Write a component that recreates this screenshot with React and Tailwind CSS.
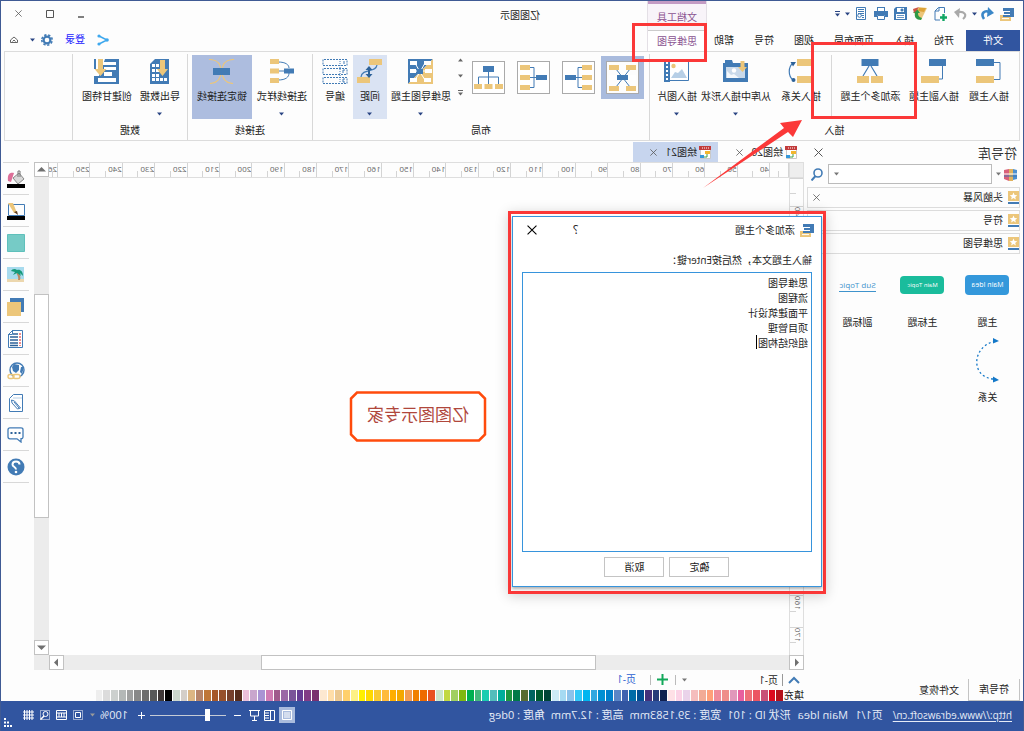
import React from "react";

const BLUE = "#427bb5";
const GOLD = "#ecc67a";

const Svg = ({ w, h, className = "", children }) => (
  <svg width={w} height={h} viewBox={`0 0 ${w} ${h}`} className={`block shrink-0 ${className}`} fill="none" aria-hidden="true">
    {children}
  </svg>
);

const Caret = ({ className = "text-[#2a4583]" }) => (
  <Svg w={5} h={4} className={className}><path d="M0 .5h5L2.5 3.5z" fill="currentColor" /></Svg>
);
const Cross = ({ size = 9, className = "text-[#555]" }) => (
  <svg width={size} height={size} viewBox="0 0 9 9" className={`block shrink-0 ${className}`} fill="none" aria-hidden="true">
    <path d="M.5.5l8 8M8.500.5l-8 8" stroke="currentColor" strokeWidth="1" />
  </svg>
);
const Logo = () => (
  <Svg w={14} h={14}>
    <path d="M4 8h10v6H3v-3z" fill={GOLD} />
    <path d="M0 1h11v3H4v1h6v2H4v1h7v2H0z" fill={BLUE} />
    <path d="M5 11.6h7" stroke="#fff" />
  </Svg>
);

/* ---------- ribbon drawings ---------- */
const IcTopic = () => (
  <Svg w={25} h={24}><path d="M8 3.500H1v17h7" stroke={BLUE} /><path d="M7 0h18v7H7z" fill={BLUE} /><path d="M7 17h18v7H7z" fill={GOLD} /></Svg>
);
const IcSub = () => (
  <Svg w={25} h={24}><path d="M3.500 6v14H8" stroke={BLUE} /><path d="M0 0h17v7H0z" fill={BLUE} /><path d="M7 17h18v7H7z" fill={GOLD} /></Svg>
);
const IcMulti = () => (
  <Svg w={26} h={24}><path d="M12 7L6 17M14 7l6 10" stroke={BLUE} strokeWidth="1.2" /><path d="M4.500 0h17v7h-17z" fill={BLUE} /><path d="M0 17h12v7H0zM14 17h12v7H14z" fill={GOLD} /></Svg>
);
const IcRelation = () => (
  <Svg w={26} h={24}>
    <path d="M0 0h17v7H0zM0 17h17v7H0z" fill={GOLD} />
    <path d="M21 4c5 4 5 13 0 17" stroke={BLUE} strokeWidth="1.200" />
    <path d="M18 3l5.500 0-2.500 4.500z" fill="#2d6299" /><circle cx="20.500" cy="21" r="2" fill="#2d6299" />
  </Svg>
);
const IcFolder = () => (
  <Svg w={25} h={22}>
    <path d="M0 3h15l1-3h7v3h2v19H0z" fill={BLUE} /><path d="M3 7h19v11H3z" fill="#c9d9ea" />
    <circle cx="14" cy="10.500" r="2.200" fill="#fff" /><path d="M9 18l5-4 3 1 4-4v7z" fill="#f4f8fc" /><path d="M3.500 1h4v6H10l-4.500 5L1 7h2.500z" fill={GOLD} />
  </Svg>
);
const IcPicture = () => (
  <Svg w={25} h={22}>
    <path d="M.5 1.500h20v19H.5z" fill="#fff" stroke={BLUE} /><path d="M19 0h6v22h-6z" fill={BLUE} />
    <path d="M21 2h2v2h-2zM21 6h2v2h-2zM21 10h2v2h-2zM21 14h2v2h-2zM21 18h2v2h-2z" fill="#fff" />
    <path d="M2 18l5-9 4 4 3-1 4 6z" fill="#b7cfe6" /><circle cx="15.500" cy="6" r="2.200" fill={GOLD} />
  </Svg>
);
const IcThemes = () => (
  <Svg w={25} h={25}>
    <path d="M0 0h25v25z" fill={BLUE} /><path d="M0 0v25h25z" fill={GOLD} />
    <path d="M2 2h7v4H2zM16 2h7v4h-7zM1 10h7v4H1zM17 10h6v4h-6zM2 19h7v4H2zM16 19h7v4h-7z" fill="#fff" />
    <path d="M8 4l5 9 5-9M8 21l5-8 5 8M8 12h10" stroke="#fff" /><path d="M10 10h6v5h-6z" fill={BLUE} />
  </Svg>
);
const IcSpacing = () => (
  <Svg w={25} h={24}>
    <path d="M0 0h13v6H0zM12 18h13v6H12z" fill={GOLD} /><path d="M5 6c1 8 15 3 16 12" stroke={BLUE} strokeWidth="1.200" />
    <path d="M13 7l3.500 4H14v4h2.500L13 19l-3.500-4H12v-4H9.500z" fill="#2d6299" />
  </Svg>
);
const IcNumber = () => (
  <Svg w={26} h={25}>
    <path d="M1 .5h24v6H1zM1 9.500h24v6H1zM1 18.500h24v6H1z" stroke={BLUE} strokeDasharray="2 1" /><path d="M8 2v21" stroke={BLUE} strokeDasharray="1 1" />
    <path d="M4 2v3M3 11h2v3M3 20h2v3H3" stroke={BLUE} />
  </Svg>
);
const IcConnStyle = () => (
  <Svg w={25} h={24}><path d="M16 3C8 3 5 6 5 9M16 21c-8 0-11-3-11-7M8 12h8" stroke={BLUE} /><path d="M0 9.500h10v5H0z" fill={BLUE} /><path d="M15 0h9v5h-9zM15 9.500h9v5h-9zM15 19h9v5h-9z" fill={GOLD} /></Svg>
);
const IcLock = () => (
  <Svg w={25} h={25}><path d="M0 .5c9 0 12 5 12 12S8 24 1 24.500M25 .5c-9 0-12 5-12 12s4 11.500 11 12" stroke={GOLD} strokeWidth="1.200" /><path d="M4 9h17v7H4z" fill={BLUE} /></Svg>
);
const IcExport = () => (
  <Svg w={19} h={25}>
    <path d="M0 0h14l5 5v20H0z" fill={BLUE} />
    <path d="M10 5h3v3h-3zM14 5h3v3h-3zM10 10h3v3h-3zM14 10h3v3h-3zM2 19h3v3H2zM6 19h3v3H6zM10 15h3v3h-3zM14 15h3v3h-3zM10 19h3v3h-3zM14 19h3v3h-3z" fill="#fff" />
    <path d="M4 1h5v9h3l-5.500 7L1 10h3z" fill={GOLD} />
  </Svg>
);
const IcGantt = () => (
  <Svg w={25} h={25}>
    <path d="M0 0h25v25H0z" fill={BLUE} /><path d="M3 3h13v3H3zM3 8h12v3H3zM7 13h8v4H7zM3 19h18v4H3z" fill="#fff" />
    <path d="M14 0h9v10h2v7h-5z" fill="#fff" /><path d="M16 0h5v10h3.500L18.500 17 12.500 10H16z" fill={GOLD} />
  </Svg>
);

/* ---------- layout gallery ---------- */
const GBoth = () => (
  <Svg w={31} h={31}><path d="M8 7l14 18M22 7L8 25M6 15.500h18" stroke={BLUE} /><path d="M2 3h10v5H2zM19 3h10v5H19zM2 24h10v5H2zM19 24h10v5H19z" fill={GOLD} /><path d="M2 13h8v5H2zM21 13h8v5h-8z" fill="#fff" /><path d="M10 13h11v5H10z" fill={BLUE} /></Svg>
);
const GLeft = () => (
  <Svg w={31} h={31}><path d="M12 5.500h4v20h-4M12 15.500h8" stroke={BLUE} /><path d="M2 3h10v5H2zM2 13h10v5H2zM2 23h10v5H2z" fill={GOLD} /><path d="M18 13h11v5H18z" fill={BLUE} /></Svg>
);
const GRight = () => (
  <Svg w={31} h={31}><path d="M19 5.500h-4v20h4M19 15.500h-8" stroke={BLUE} /><path d="M19 3h10v5H19zM19 13h10v5H19zM19 23h10v5H19z" fill={GOLD} /><path d="M2 13h11v5H2z" fill={BLUE} /></Svg>
);
const GTree = () => (
  <Svg w={31} h={31}><path d="M15.500 9v13M5.500 22v-7h20v7" stroke={BLUE} /><path d="M1 22h8v5H1zM11.500 22h8v5h-8zM22 22h8v5h-8z" fill={GOLD} /><path d="M10 4h11v6H10z" fill={BLUE} /></Svg>
);

/* ---------- quick access ---------- */
const QUndo = () => (<Svg w={13} h={13}><path d="M10 12C14 6 9 3 5 5" stroke="#3b87c8" strokeWidth="2.600" /><path d="M6 0L0 6l7 4z" fill="#3b87c8" /></Svg>);
const QRedo = () => (<Svg w={13} h={13}><path d="M4 12C-1 8 3 4 9 5" stroke="#a9a9a9" strokeWidth="2.200" /><path d="M7 1l6 4-5 6z" fill="#a9a9a9" /></Svg>);
const QNew = () => (<Svg w={13} h={14}><path d="M7 13H12V4L8.500.5H2.500V6" stroke={BLUE} /><path d="M12 4H8V.5" stroke={BLUE} /><path d="M3.500 7v7M0 10.500h7" stroke="#12a664" strokeWidth="2.400" /></Svg>);
const QOpen = () => (<Svg w={14} h={13}><path d="M0 1l8-1 5 6-7 7z" fill={GOLD} /><path d="M1 1h7l1 3-6 1z" fill="#dda338" /><path d="M6 13c5 0 7-3 6-7l2 0-4-4-3 4h2c0 3-1 4-4 5z" fill="#2f9a45" /><path d="M8 0l6 2-1 4-3-3z" fill="#cf5343" /></Svg>);
const QSave = () => (<Svg w={13} h={13}><path d="M0 0h11l2 2v11H0z" fill={BLUE} /><path d="M3 1h7v4H3zM2 7h9v5H2z" fill="#fff" /><path d="M4 2h2v2H4zM3 8.500h7M3 10.500h7" stroke={BLUE} fill={BLUE} strokeWidth=".8" /></Svg>);
const QPrint = () => (<Svg w={14} h={13}><path d="M3 0h8v4H3zM0 4h14v6H0z" fill={BLUE} /><path d="M4 1h6v3H4zM3 8h8v5H3z" fill="#fff" /><path d="M3.500 8.500h7v4h-7z" stroke={BLUE} /></Svg>);
const QPreview = () => (<Svg w={10} h={13}><path d="M.5.5h9v12h-9z" stroke={BLUE} fill="#fff" /><path d="M2 2.500h6M2 4.500h6M2 6.500h6M2 8.500h3M2 10.500h2" stroke={BLUE} /><circle cx="6.500" cy="8.500" r="1.800" stroke={BLUE} fill="#fff" /></Svg>);
const Gear = () => (
  <Svg w={12} h={12}><circle cx="6" cy="6" r="3.400" stroke={BLUE} strokeWidth="2.200" /><circle cx="6" cy="6" r="5.200" stroke={BLUE} strokeWidth="1.600" strokeDasharray="2.300 1.780" /></Svg>
);
const ShareIcon = () => (
  <Svg w={12} h={12}><path d="M10 2L2 6l8 4" stroke="#3ea8ee" strokeWidth="1.500" /><circle cx="10" cy="2" r="1.600" fill="#3ea8ee" /><circle cx="2" cy="6" r="1.800" fill="#3ea8ee" /><circle cx="10" cy="10" r="1.600" fill="#3ea8ee" /></Svg>
);

/* ---------- tool strip ---------- */
const tools = [
  ["填充", <Svg w={18} h={18}><path d="M11 3c4-1 7 1 6 8l-3 1-2-6z" fill="#dd6f98" /><path d="M6 3l6 5-5 6-6-5z" fill="#d9d9d9" stroke="#888" /><path d="M5 7V1h2v6" stroke="#777" /><path d="M0 14h18v4H0z" fill="#000" /></Svg>],
  ["线条", <Svg w={18} h={18}><path d="M.5 2.500h16v11H.5z" stroke={BLUE} /><path d="M0 14h18v4H0z" fill="#000" /><path d="M12 1l5 0-6 10-3 0z" fill={GOLD} /><path d="M11 10l-4 3 1-4z" fill="#5b3b20" /></Svg>],
  ["阴影", <Svg w={18} h={18}><path d="M.5.5h17v17H.5z" fill="#76cbc6" stroke="#5fc0bb" /></Svg>],
  ["图片", <Svg w={17} h={15}><path d="M0 0h17v15H0z" fill="#a8dbee" /><path d="M0 12h17v3H0z" fill="#ecd7ae" /><path d="M6 5c-2 3-3 5-2 8h2c-1-3 1-5 2-8z" fill="#b98a63" /><path d="M1 9c0-5 3-7 6-6 2-2 5-1 6 1l-4 1 2 3-4-2-4 3 1-3z" fill="#169a7a" /></Svg>],
  ["图层", <Svg w={18} h={18}><path d="M1 0h14v14H1z" fill={BLUE} /><path d="M4 4h14v14H4z" fill={GOLD} /></Svg>],
  ["页面", <Svg w={15} h={18}><path d="M.5.5h10l4 4v13H.5z" stroke={BLUE} fill="#fff" /><path d="M10.500 0v4.500H15" stroke={BLUE} /><path d="M5 4h5M5 7h8M5 10h8M5 13h8M5 15.500h8" stroke="#2d6299" strokeWidth="1.300" /><path d="M3 3v13" stroke="#ea5a5a" strokeWidth="1.400" strokeDasharray="2 1" /></Svg>],
  ["链接", <Svg w={18} h={18}><circle cx="8" cy="8" r="7" stroke={BLUE} strokeWidth="1.400" /><path d="M6 3l5-1 2 3-1 4-3 2-3-3z" fill={BLUE} /><path d="M1 5l3 0 1 5-2 2z" fill={BLUE} /><rect x="5" y="12.500" width="7" height="4" rx="2" stroke={GOLD} strokeWidth="1.400" fill="#fff" /><rect x="11" y="12.500" width="6" height="4" rx="2" stroke={GOLD} strokeWidth="1.400" /></Svg>],
  ["附件", <Svg w={14} h={18}><path d="M.5.5h9l4 4v13H.5z" stroke={BLUE} fill="#fff" /><path d="M1 4h9" stroke="#b7cfe6" /><path d="M2.500 14l6-7 3-1-.5 3-5.500 6-3-1M4 14l5-6" stroke={BLUE} /></Svg>],
  ["批注", <Svg w={17} h={16}><path d="M3 .8h11q2 0 2 2v7q0 2-2 2H7L3 15v-3.300q-2 0-2-2v-7q0-1.900 2-1.900z" stroke={BLUE} strokeWidth="1.300" fill="#fff" /><path d="M3.500 6h10" stroke="#2d6299" strokeWidth="2" strokeDasharray="2 2" /></Svg>],
  ["帮助", <Svg w={18} h={18}><circle cx="9" cy="9" r="8.500" fill={BLUE} /><path d="M5.500 6.500c0-4 7-4 7 0 0 2.500-3.500 2-3.500 5" stroke="#fff" strokeWidth="2" /><circle cx="9" cy="14" r="1.300" fill="#fff" /></Svg>],
];

const palette = ["#b5121b", "#dd0a1e", "#c85078", "#ec5563", "#ee7078", "#e8609f", "#e198bb", "#ef8e8a", "#f08c9b", "#ffa07a", "#f2ab96", "#f5bdbd", "#ead3ea", "#fbd3e6", "#fee0e6", "#10204f", "#263c7a", "#44307a", "#004e93", "#006ba8", "#4062b0", "#5a85c6", "#007fcb", "#008fd3", "#33a8e0", "#00b6f0", "#33c8f8", "#8cc2ea", "#a5daf2", "#cdeaf6", "#004437", "#005a30", "#006461", "#576b2f", "#007a48", "#1e9640", "#00ae9b", "#52bdbb", "#1accb0", "#45b87c", "#00b050", "#80b810", "#a0cf60", "#c2d840", "#cce6ca", "#e85320", "#ee6b00", "#f08000", "#f39c52", "#f4a800", "#ffae00", "#ffbb3c", "#f9ca30", "#ffd900", "#fff000", "#fdf184", "#ffd06c", "#ecc890", "#ffdda8", "#fde8d0", "#7a3070", "#823c86", "#663c94", "#7a5499", "#9a68a6", "#a05a8c", "#d07cb4", "#a994d4", "#c9a6cd", "#ebc0da", "#562d1d", "#76402c", "#96502c", "#a65828", "#bf7638", "#b6846a", "#dcb684", "#d4cec8", "#cbd6cc", "#000000", "#3e3736", "#585858", "#6e6e6e", "#888888", "#9fa0a0", "#b4b8b7", "#ccd0ce", "#dcdcdc", "#eeeeee"];

const RibbonButton = ({ icon, label, caret, className }) => (
  <button className={`flex h-16 shrink-0 flex-col items-center whitespace-nowrap ${className}`}>
    <span className="flex h-8 items-center">{icon}</span>
    <span className="mt-px leading-4">{label}</span>
    {caret && <span className="mt-2"><Caret /></span>}
  </button>
);

const Group = ({ title, className, children }) => (
  <section className={`flex flex-col ${className}`}>
    <div className="flex h-16">{children}</div>
    <h2 className="pt-[3px] text-center leading-4">{title}</h2>
  </section>
);

const Rule = () => <span className="-mt-px mb-0 w-px bg-[#d8d8d8]" />;

function Ribbon() {
  return (
    <div className="mx-[3px] flex h-[90px] border border-[#dcdcdc] pt-[3px]">
      <Group title="插入" className="w-[369px] shrink-0">
        <RibbonButton icon={<IcTopic />} label="插入主题" className="w-[60px]" />
        <RibbonButton icon={<IcSub />} label="插入副主题" className="w-[50px]" />
        <RibbonButton icon={<IcMulti />} label="添加多个主题" className="w-[77px]" />
        <span className="w-px bg-[#d8d8d8]" />
        <RibbonButton icon={<IcRelation />} label="插入关系" className="w-[60px]" />
        <RibbonButton icon={<IcFolder />} label="从库中插入形状" caret className="w-[70px]" />
        <RibbonButton icon={<IcPicture />} label="插入图片" caret className="w-[48px]" />
      </Group>
      <Rule />
      <Group title="布局" className="w-[336px] shrink-0">
        <div className="flex h-11 items-center pl-[5px]">
          <button aria-label="双向布局" className="bg-[#a9bbdd] p-[5px]"><span className="block border border-[#aaa] bg-[#fdfdfd]"><GBoth /></span></button>
          <button aria-label="向左布局" className="ml-[6px] border border-[#aaa] bg-white"><GLeft /></button>
          <button aria-label="向右布局" className="ml-3 border border-[#aaa] bg-white"><GRight /></button>
          <button aria-label="树状布局" className="ml-3 border border-[#aaa] bg-white"><GTree /></button>
          <span className="ml-[9px] flex flex-col items-center gap-3">
            <Caret className="rotate-180 text-[#666]" />
            <Caret className="text-[#666]" />
            <span className="border-t border-[#666] pt-px"><Caret className="text-[#666]" /></span>
          </span>
        </div>
        <RibbonButton icon={<IcThemes />} label="思维导图主题" caret className="ml-[3px] w-[68px]" />
        <RibbonButton icon={<IcSpacing />} label="间距" caret className="w-[34px] bg-[#dae3f3]" />
        <RibbonButton icon={<IcNumber />} label="编号" className="w-[36px]" />
      </Group>
      <Rule />
      <Group title="连接线" className="w-[124px] shrink-0">
        <RibbonButton icon={<IcConnStyle />} label="连接线样式" caret className="w-[60px]" />
        <RibbonButton icon={<IcLock />} label="锁定连接线" className="w-[60px] bg-[#adbddf]" />
      </Group>
      <Rule />
      <Group title="数据" className="w-[114px] shrink-0">
        <RibbonButton icon={<IcExport />} label="导出数据" caret className="w-[54px]" />
        <RibbonButton icon={<IcGantt />} label="创建甘特图" className="w-[52px]" />
      </Group>
      <Rule />
    </div>
  );
}

function TopBar() {
  return (
    <header className="flex">
      <div className="flex w-[316px] shrink-0 flex-col">
        <div className="flex h-[29px] items-center pb-1 pl-[9px]">
          <Logo /><span className="ml-[6px]"><QUndo /></span><span className="ml-1"><Caret /></span>
          <span className="ml-[5px]"><QRedo /></span>
          <span className="ml-[7px]"><QNew /></span><span className="ml-[7px]"><QOpen /></span>
          <span className="ml-[6px]"><QSave /></span><span className="ml-[6px]"><QPrint /></span>
          <span className="ml-2"><QPreview /></span><span className="ml-[6px]"><Caret /></span>
          <span className="ml-[5px] border-t border-[#2a4583] pt-px"><Caret /></span>
        </div>
        <nav className="flex h-[21px] items-center gap-5 pl-[3px]">
          <button className="-mr-2 h-full w-[54px] bg-[#3155a0] text-white">文件</button>
          {["开始", "插入", "页面布局", "视图", "符号", "帮助"].map((t) => (
            <button key={t} className="whitespace-nowrap">{t}</button>
          ))}
        </nav>
      </div>
      <div className="flex w-[60px] shrink-0 flex-col border-x border-[#e4e0e6] text-[#8a5290]">
        <div className="flex h-[29px] items-center justify-center border-t-[3px] border-[#c39bc4] bg-[#f8f4f9]">文档工具</div>
        <button className="h-[21px] border-t border-[#ccc] bg-white">思维导图</button>
      </div>
      <div className="flex flex-1 flex-col">
        <div className="flex h-[29px] items-center justify-between pr-[14px]">
          <h1 className="pl-[107px]">亿图图示</h1>
          <span className="-mt-1 flex items-center gap-6 text-[#555]">
            <button aria-label="最小化"><Svg w={6} h={8}><path d="M0 7h6" stroke="currentColor" strokeWidth="1.500" /></Svg></button>
            <button aria-label="最大化"><Svg w={8} h={8}><path d="M.5.5h7v7h-7z" stroke="currentColor" /></Svg></button>
            <button aria-label="关闭"><Cross size={7} /></button>
          </span>
        </div>
        <div className="flex h-[21px] items-center justify-end pr-[9px] pb-0.5">
          <button aria-label="分享"><ShareIcon /></button>
          <a href="#login" className="ml-3 text-[#1a1aff]">登录</a>
          <button aria-label="设置" className="ml-3"><Gear /></button>
          <span className="ml-[6px]"><Caret /></span>
          <button aria-label="折叠功能区" className="ml-3"><Svg w={8} h={7}><path d="M.5 4L4 1l3.500 3M.5 6.500h7M2.500 5.500L4 4l1.500 1.500M.5 4v2.500M7.500 4v2.500" stroke="#555" strokeWidth=".9" /></Svg></button>
        </div>
      </div>
    </header>
  );
}

const BookIcon = () => (
  <Svg w={13} h={13}><path d="M0 2l4-1v11l-4-1z" fill="#4c8fd0" /><path d="M4 1h4v12H4z" fill="#e0b25f" /><path d="M8 1l5 1v9l-5 2z" fill="#d9607a" /><path d="M0 6h13" stroke="#fff" /><path d="M0 8h13" stroke="#3b74b4" /></Svg>
);
const StarIcon = () => (
  <Svg w={11} h={13}><path d="M0 0h11v10H0z" fill={GOLD} /><path d="M0 11h11v2H0z" fill={BLUE} /><path d="M5.500 1.500l1.100 2.500 2.700.2-2.100 1.700.7 2.600-2.400-1.500-2.400 1.500.7-2.600L1.700 4.200 4.400 4z" fill="#fff" /></Svg>
);

function Library() {
  return (
    <aside className="flex w-[216px] shrink-0 flex-col pl-[3px]">
      <div className="flex h-[21px] items-center justify-between pt-0.5 pr-[7px] pl-[3px]">
        <h2 className="text-[13px] leading-4 text-[#333]">符号库</h2>
        <button aria-label="关闭符号库"><Cross size={9} /></button>
      </div>
      <div className="mt-0.5 flex h-5 items-center pl-[3px]">
        <BookIcon /><span className="ml-[3px]"><Caret className="text-[#777]" /></span>
        <label className="ml-1 flex h-5 flex-1 items-center border border-[#bbb] bg-white pr-[5px]">
          <input aria-label="搜索符号" className="w-full outline-none" />
          <Caret className="text-[#777]" />
        </label>
        <button aria-label="搜索" className="mr-1 ml-[5px]"><Svg w={12} h={13}><circle cx="5" cy="5" r="4" stroke={BLUE} strokeWidth="1.600" /><path d="M7.500 8l4 4.500" stroke={BLUE} strokeWidth="2" /></Svg></button>
      </div>
      <div className="mt-[3px] flex flex-col gap-0.5">
        {["头脑风暴", "符号", "思维导图"].map((t, i) => (
          <div key={t} className="flex h-[21px] items-center border border-[#dcdcdc] pr-[5px]">
            <StarIcon /><span className="ml-[5px] flex-1">{t}</span>
            {i === 0 && <button aria-label="移除"><Cross size={7} /></button>}
          </div>
        ))}
      </div>
      <div className="mt-[21px] grid grid-cols-[65px_65px_65px] text-center">
        <figure className="flex flex-col items-center gap-[19px]">
          <span className="w-11 rounded bg-[#3498db] text-[7px] leading-5 text-white">Main Idea</span><figcaption className="leading-4">主题</figcaption>
        </figure>
        <figure className="flex flex-col items-center gap-[19px]">
          <span className="my-px w-11 rounded bg-[#1abc9c] text-[6px] leading-[18px] text-white">Main Topic</span><figcaption className="leading-4">主标题</figcaption>
        </figure>
        <figure className="flex flex-col items-center gap-[19px]">
          <span className="flex h-5 items-end text-[8px]"><span className="mb-[3px] border-b border-[#3f93cc] leading-3 text-[#3f93cc]">Sub Topic</span></span><figcaption className="leading-4">副标题</figcaption>
        </figure>
        <figure className="flex flex-col items-center gap-2 pt-2">
          <Svg w={24} h={45}><path d="M4 3c24 6 24 36 2 38" stroke="#1478c8" strokeWidth="1.300" strokeDasharray="2 2.500" /><path d="M0 3l6-3v5.500zM0 42l6-3.500v6z" fill="#1478c8" /></Svg>
          <figcaption className="-mt-0.5 leading-4">关系</figcaption>
        </figure>
      </div>
      <div className="mt-auto flex h-[22px]">
        <button className="w-[52px] border-x border-b border-[#c4c4c4]">符号库</button>
        <button className="ml-[9px]">文件恢复</button>
      </div>
    </aside>
  );
}

const DocIcon = () => (
  <Svg w={13} h={13}><path d="M1.500 3.500h10v9h-10z" fill="#fff" stroke="#c9c9c9" /><path d="M1 0h12v4H1z" fill="#c23b3b" /><path d="M3 2h8" stroke="#fff" strokeDasharray="1 1" /><path d="M2 5h5v3H2z" fill="#f3b62f" /><path d="M5 8v3h3" stroke="#43a047" /><path d="M8 9h4v3H8z" fill="#3498db" /></Svg>
);

const hTicks = Array.from({ length: 22 }, (_, i) => 40 + i * 10);
const vTicks = Array.from({ length: 13 }, (_, i) => 40 + i * 10);

const VMark = ({ n, className }) => (
  <div className={`relative flex flex-col overflow-hidden border-t border-[#d4d4d4] ${className}`}>
    <span className="rotate-180 leading-[9px] [writing-mode:vertical-rl]">{n}</span>
    <span className="absolute top-1/2 right-0 w-1.5 border-t border-[#d4d4d4]" />
  </div>
);
const HMark = ({ n, className }) => (
  <div className={`relative overflow-hidden border-l border-[#d4d4d4] leading-[11px] ${className}`}>
    {n}<span className="absolute bottom-0 left-1/2 h-1.5 border-l border-[#d4d4d4]" />
  </div>
);

const ScrollButton = ({ label, d }) => (
  <button aria-label={label} className="flex h-[15px] w-[15px] shrink-0 items-center justify-center border border-[#c2c2c2] bg-white">
    <Svg w={9} h={9}><path d={d} fill="#707070" /></Svg>
  </button>
);

function Workspace() {
  return (
    <main className="flex min-w-0 flex-1 flex-col pl-[3px]">
      <div className="flex h-[21px] items-end">
        <div className="flex h-5 w-[86px] items-center pl-[6px]">
          <DocIcon /><span className="ml-0.5">绘图20</span><button aria-label="关闭绘图20" className="ml-[9px]"><Cross size={7} /></button>
        </div>
        <div className="flex h-5 w-[85px] items-center bg-[#c7d5ee] pl-[6px]">
          <DocIcon /><span className="ml-0.5">绘图21</span><button aria-label="关闭绘图21" className="ml-[9px]"><Cross size={7} /></button>
        </div>
      </div>
      <div className="flex flex-1">
        <div className="flex w-[15px] shrink-0 flex-col text-[8px] text-[#666]">
          <div className="h-4 border border-[#dedede] bg-[#eee]" />
          <div className="flex min-h-0 flex-1 flex-col border-x border-[#dedede]">
            <VMark n="" className="h-7 shrink-0" />
            {vTicks.map((n) => <VMark key={n} n={n} className="min-h-0 flex-1" />)}
            <VMark n={170} className="h-7 shrink-0" />
          </div>
          <ScrollButton label="向左滚动" d="M6 0.500v8L2 4.500z" />
        </div>
        <div className="flex min-w-0 flex-1 flex-col">
          <div className="flex h-4 border-y border-[#dedede] text-[8px] text-[#666]">
            <HMark n="" className="w-[19px] shrink-0" />
            {hTicks.map((n) => <HMark key={n} n={n} className="min-w-0 flex-1" />)}
            <HMark n={260} className="w-[9px] shrink-0" />
          </div>
          <div className="relative flex-1 bg-[#fefefe]">
            <div className="absolute top-[213px] left-[302px] grid w-[138px] place-items-center">
              <Svg w={138} h={52} className="col-start-1 row-start-1"><path d="M8 1.500h122l6 6v36l-6 6H8l-6-6v-36z" stroke="#ff4b0c" strokeWidth="2.500" fill="#fff" /></Svg>
              <span className="col-start-1 row-start-1 pb-1 text-[17px] text-[#b0473c]">亿图图示专家</span>
            </div>
          </div>
          <div className="flex h-[15px] bg-[#ececec]">
            <div className="ml-[193px] w-[335px] border border-[#c2c2c2] bg-white" />
            <div className="ml-auto"><ScrollButton label="向右滚动" d="M3 .5v8l4-4z" /></div>
          </div>
        </div>
        <div className="flex w-[15px] shrink-0 flex-col bg-[#ececec]">
          <ScrollButton label="向上滚动" d="M0 6.500h9l-4.500-4.500z" />
          <div className="mt-[117px] h-[224px] border border-[#c2c2c2] bg-white" />
          <div className="mt-auto pb-[15px]"><ScrollButton label="向下滚动" d="M0 2.500h9L4.500 7z" /></div>
        </div>
      </div>
      <div className="flex h-[19px] items-center pl-1">
        <Svg w={12} h={8}><path d="M1 7l5-5 5 5" stroke={BLUE} strokeWidth="2" /></Svg>
        <span className="ml-[5px] border-l border-[#999] pl-1 leading-3">页-1</span>
        <span className="ml-[72px]"><Caret className="text-[#777]" /></span>
        <span className="ml-1.5 h-2.5 w-px bg-[#bbb]" />
        <button aria-label="新建页" className="ml-[7px]"><Svg w={11} h={11}><path d="M5.500 0v11M0 5.500h11" stroke="#12a85a" strokeWidth="2" /></Svg></button>
        <span className="ml-1.5 h-2.5 w-px bg-[#bbb]" />
        <a href="#page-1" className="ml-[14px] text-[#2b5fd0]">页-1</a>
      </div>
      <div className="mr-[61px] flex h-3 items-center">
        <span className="mr-px shrink-0 leading-3">填充</span>
        <div className="flex h-[11px] flex-1 gap-px">
          {palette.map((c, i) => <span key={i} className="flex-1" style={{ backgroundColor: c }} />)}
        </div>
      </div>
    </main>
  );
}

function StatusBar() {
  return (
    <footer className="relative flex h-[30px] items-center bg-[#3155a0] pb-0.5 pl-[11px] text-[11px] whitespace-nowrap text-[#e6ecf7]">
      <a href="http://www.edrawsoft.cn/" className="text-[10px] underline underline-offset-2">http://www.edrawsoft.cn/</a>
      <span className="ml-[10px]">页1/1</span>
      <span className="ml-[7px]">Main Idea</span>
      <span className="ml-[7px]">形状 ID : 101</span>
      <span className="ml-[6px]">宽度 : 39.1583mm</span>
      <span className="ml-[6px]">高度 : 12.7mm</span>
      <span className="ml-[6px]">角度 : 0deg</span>
      <div className="mr-[22px] ml-auto flex items-center">
        <button aria-label="普通视图" className="bg-[#a9bbdd] p-[3px]"><Svg w={10} h={10}><path d="M.5.5h9v9h-9zM2 3h6M2 5h6M2 7h6" stroke="#fff" /></Svg></button>
        <button aria-label="双页视图" className="ml-1"><Svg w={11} h={11}><path d="M.5.5h10v10H.5zM4.500 0v11M6 3h4M6 5.500h4M6 8h4" stroke="#fff" /></Svg></button>
        <button aria-label="演示" className="ml-1"><Svg w={11} h={11}><path d="M0 .5h11M1.500 1v5h8V1M5.500 6v4M3 10.500h5" stroke="#fff" /></Svg></button>
        <button aria-label="缩小" className="ml-2"><Svg w={7} h={7}><path d="M0 3.500h7" stroke="#fff" /></Svg></button>
        <label className="relative ml-2 flex h-3 w-[76px] items-center">
          <span className="h-px w-full bg-[#c5cbd6]" />
          <input type="range" aria-label="缩放" defaultValue="22" className="absolute inset-0 h-3 w-full cursor-pointer appearance-none bg-transparent [&::-webkit-slider-thumb]:h-3 [&::-webkit-slider-thumb]:w-[5px] [&::-webkit-slider-thumb]:appearance-none [&::-webkit-slider-thumb]:bg-white" />
        </label>
        <button aria-label="放大" className="ml-[5px]"><Svg w={7} h={7}><path d="M0 3.500h7M3.500 0v7" stroke="#fff" /></Svg></button>
        <span className="ml-[10px]">100%</span>
        <span className="ml-[5px]"><Caret className="text-[#9a9a9a]" /></span>
        <button aria-label="适应页面" className="ml-[7px]"><Svg w={10} h={10}><path d="M.5.5h9v9h-9z" stroke="#fff" strokeDasharray="1 1" /><path d="M2.500 2.500h5v5h-5z" stroke="#fff" /></Svg></button>
        <button aria-label="适应宽度" className="ml-[6px]"><Svg w={11} h={10}><path d="M.5.5h10v9H.5zM.5 3h10M.5 7h10M3 3v4M8 3v4M5.500 3v4" stroke="#fff" /></Svg></button>
        <button aria-label="缩放区域" className="ml-[6px]"><Svg w={10} h={10}><path d="M.5.5h9v9h-9z" stroke="#fff" strokeDasharray="1 1" /><circle cx="4.500" cy="4" r="2.500" stroke="#fff" /><path d="M6 6l3.500 3.500" stroke="#fff" strokeWidth="1.500" /></Svg></button>
        <button aria-label="网格" className="ml-[6px]"><Svg w={11} h={10}><path d="M0 2h11M0 5h11M0 8h11M2 0v10M4.500 0v10M7 0v10M9.500 0v10" stroke="#fff" /></Svg></button>
      </div>
      <Svg w={9} h={9} className="absolute right-0.5 bottom-1"><path d="M6 0h2v2H6zM3 3.500h2v2H3zM6 3.500h2v2H6zM0 7h2v2H0zM3 7h2v2H3zM6 7h2v2H6z" fill="#fff" /></Svg>
    </footer>
  );
}

function TopicDialog() {
  return (
    <div className="absolute top-[210px] left-[197px] border-[3px] border-[#fb3838] px-px pt-0.5 pb-1 shadow-[0_2px_12px_rgba(0,0,0,0.18)]">
      <div role="dialog" aria-labelledby="dlg-title" className="flex w-[310px] flex-col border border-[#3794dc] bg-white px-[9px] pb-[9px] shadow-[0_2px_3px_rgba(0,0,0,0.3)]">
        <div className="flex h-[26px] items-center pr-[5px]">
          <span className="-ml-0.5"><Logo /></span><h2 id="dlg-title" className="ml-[5px] flex-1">添加多个主题</h2>
          <button aria-label="帮助" className="mr-9 text-xs font-medium">?</button>
          <button aria-label="关闭"><Cross size={10} className="text-black" /></button>
        </div>
        <label htmlFor="topics" className="flex h-[29px] items-end pb-1">输入主题文本，然后按Enter键：</label>
        <div className="relative">
          <textarea id="topics" spellCheck="false" className="block h-[280px] w-full resize-none border border-[#3794dc] bg-white px-[3px] py-[3px] leading-[15px] outline-none" defaultValue={"思维导图\n流程图\n平面建筑设计\n项目管理\n组织结构图"} />
          <span className="absolute top-[63px] left-[55px] h-[14px] w-px bg-black" />
        </div>
        <div className="mt-[5px] flex justify-center gap-[5px]">
          <button className="h-5 w-[60px] border border-[#c4c4c4]">确定</button>
          <button className="h-5 w-[60px] border border-[#c4c4c4]">取消</button>
        </div>
      </div>
    </div>
  );
}

export default function App() {
  return (
    <div className="relative flex min-h-screen -scale-x-100 flex-col overflow-hidden border-x border-t border-[#3f5a94] bg-[#fdfdfd] font-['Open_Sans','Noto_Sans_CJK_SC',sans-serif] text-[10px] text-[#222]">
      <TopBar />
      <Ribbon />
      <div className="flex flex-1">
        <Library />
        <Workspace />
        <aside className="w-[33px] shrink-0 pt-[21px] pr-0.5 pl-[5px]">
          {tools.map(([name, icon]) => (
            <button key={name} aria-label={name} className="flex h-8 w-full items-center justify-center border-t border-[#d8d8d8]">{icon}</button>
          ))}
          <hr className="border-[#d8d8d8]" />
        </aside>
      </div>
      <StatusBar />
      <TopicDialog />
      <div className="absolute top-[22px] left-[316px] h-[39px] w-[75px] border-[3px] border-[#fb3838]" />
      <div className="absolute top-[41px] left-[106px] h-[77px] w-[106px] border-[3px] border-[#fb3838]" />
      <Svg w={100} h={70} className="absolute top-[119px] left-[221px]"><path d="M0 0l22 3-4 5L99 68 14 12l-5 5z" fill="#fb3838" /></Svg>
    </div>
  );
}
